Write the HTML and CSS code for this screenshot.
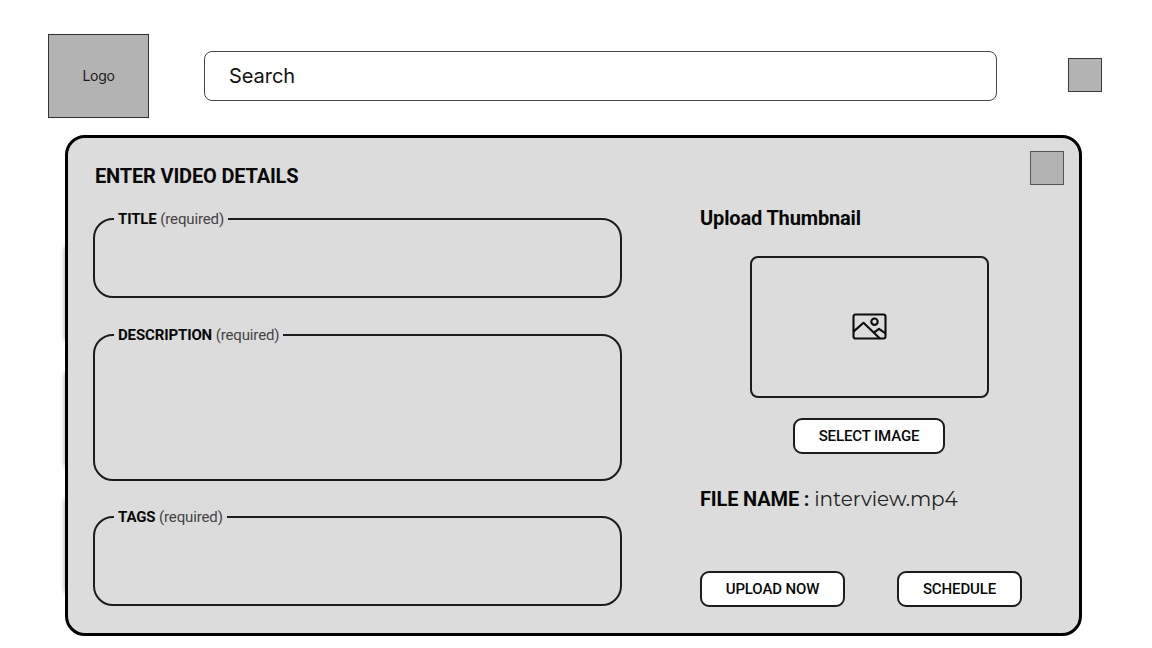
FILE: index.html
```html
<!DOCTYPE html>
<html lang="en">
<head>
<meta charset="utf-8">
<title>Upload video</title>
<link rel="stylesheet" href="styles.css">
</head>
<body>
<header class="topbar">
  <div class="logo">Logo</div>
  <div class="search">Search</div>
  <div class="account"></div>
</header>
<main class="stage">
  <div class="cards-behind"><i></i><i></i><i></i></div>
  <section class="panel">
    <form class="details">
      <h1 class="heading">ENTER VIDEO DETAILS</h1>
      <fieldset class="field field-title"><legend><b>TITLE</b> (required)</legend></fieldset>
      <fieldset class="field field-description"><legend><b>DESCRIPTION</b> (required)</legend></fieldset>
      <fieldset class="field field-tags"><legend><b>TAGS</b> (required)</legend></fieldset>
    </form>
    <aside class="media">
      <div class="close"></div>
      <h2 class="subheading">Upload Thumbnail</h2>
      <div class="preview">
        <svg class="image-icon" width="36" height="28" viewBox="0 0 36 28" fill="none" stroke="#0c0c0c" stroke-width="2.1" stroke-linejoin="round">
          <rect x="1.5" y="1.5" width="32" height="24" rx="2"/>
          <path d="M1.5 18.6 L11.5 9.8 L27.9 25.5"/>
          <path d="M22.2 19.3 L27 15.8 L33.5 20.3"/>
          <circle cx="22.5" cy="8.7" r="3.2"/>
        </svg>
      </div>
      <button class="btn select">SELECT IMAGE</button>
      <p class="file"><b>FILE NAME :</b><span class="filename">interview.mp4</span></p>
      <div class="actions">
        <button class="btn upload">UPLOAD NOW</button>
        <button class="btn schedule">SCHEDULE</button>
      </div>
    </aside>
  </section>
</main>
</body>
</html>
```
FILE: styles.css
```css
* { box-sizing: border-box; }
body { margin: 0; background: #fff; color: #080808; font-family: Roboto, "Liberation Sans", sans-serif; height: 648px; overflow: hidden; }
.topbar { display: flex; align-items: center; height: 135px; padding: 0 50px 0 48px; }
.logo { width: 101px; height: 84px; margin-top: 16px; border: 1px solid #333; background: #b3b3b3; display: flex; align-items: center; justify-content: center; font: 14px Inter, sans-serif; letter-spacing: -.3px; color: #1c1c1c; }
.search { width: 793px; height: 50px; margin: 17px 71px 0 55px; border: 1px solid #484848; border-radius: 8px; padding-left: 24px; font: 20px/49px Inter, sans-serif; letter-spacing: -.05px; color: #111; }
.account, .close { width: 34px; height: 34px; border: 1px solid #3a3a3a; background: #b3b3b3; }
.account { margin-top: 15px; }
.stage { position: relative; width: 1017px; height: 501px; margin-left: 65px; }
.cards-behind { position: absolute; inset: 110px auto auto 0; display: grid; gap: 31px; }
.cards-behind i { width: 200px; height: 95px; background: #fff; border-radius: 4px; box-shadow: 0 1px 5px rgba(0,0,0,.4); }
.panel { position: relative; display: flex; height: 100%; border: 3px solid #000; border-radius: 20px; background: #dcdcdc; }
.details { width: 529px; margin-left: 25px; }
.heading { margin: 26px 0 0 2px; height: 47px; font-size: 20px; line-height: 24px; font-weight: 700; letter-spacing: -.17px; white-space: nowrap; }
.field { margin: 0; padding: 0 0 0 19px; border: 2px solid #1c1c1c; border-radius: 20px; }
.field legend { height: 16px; padding: 0 4px; font-size: 15px; line-height: 16px; letter-spacing: -.13px; color: #444; white-space: nowrap; }
.field b { color: #080808; }
.field-title { height: 87px; }
.field-description { height: 154px; margin-top: 29px; }
.field-tags { height: 97px; margin-top: 28px; }
.media { width: 364px; margin-left: 78px; display: flex; flex-direction: column; }
.close { align-self: flex-end; margin-top: 13px; border-color: #555; }
.subheading { margin: 21px 0 0; font-size: 20px; line-height: 24px; font-weight: 700; letter-spacing: -.15px; }
.preview { width: 239px; height: 142px; margin: 26px 0 0 50px; border: 2px solid #1c1c1c; border-radius: 8px; display: flex; align-items: center; justify-content: center; }
.btn { height: 36px; padding: 0; border: 2px solid #1c1c1c; border-radius: 9px; background: #fff; color: #080808; font: 500 15px Roboto, sans-serif; letter-spacing: -.13px; }
.select { width: 152px; margin: 20px 0 0 93px; }
.file { display: flex; align-items: baseline; margin: 33px 0 0; height: 24px; font-size: 20px; line-height: 24px; letter-spacing: -.15px; }
.filename { margin-left: 5px; font-family: Montserrat, Lato, sans-serif; font-weight: 400; letter-spacing: -.07px; color: #222; }
.actions { display: flex; gap: 52px; margin-top: 60px; }
.upload { width: 145px; }
.schedule { width: 125px; }
```
